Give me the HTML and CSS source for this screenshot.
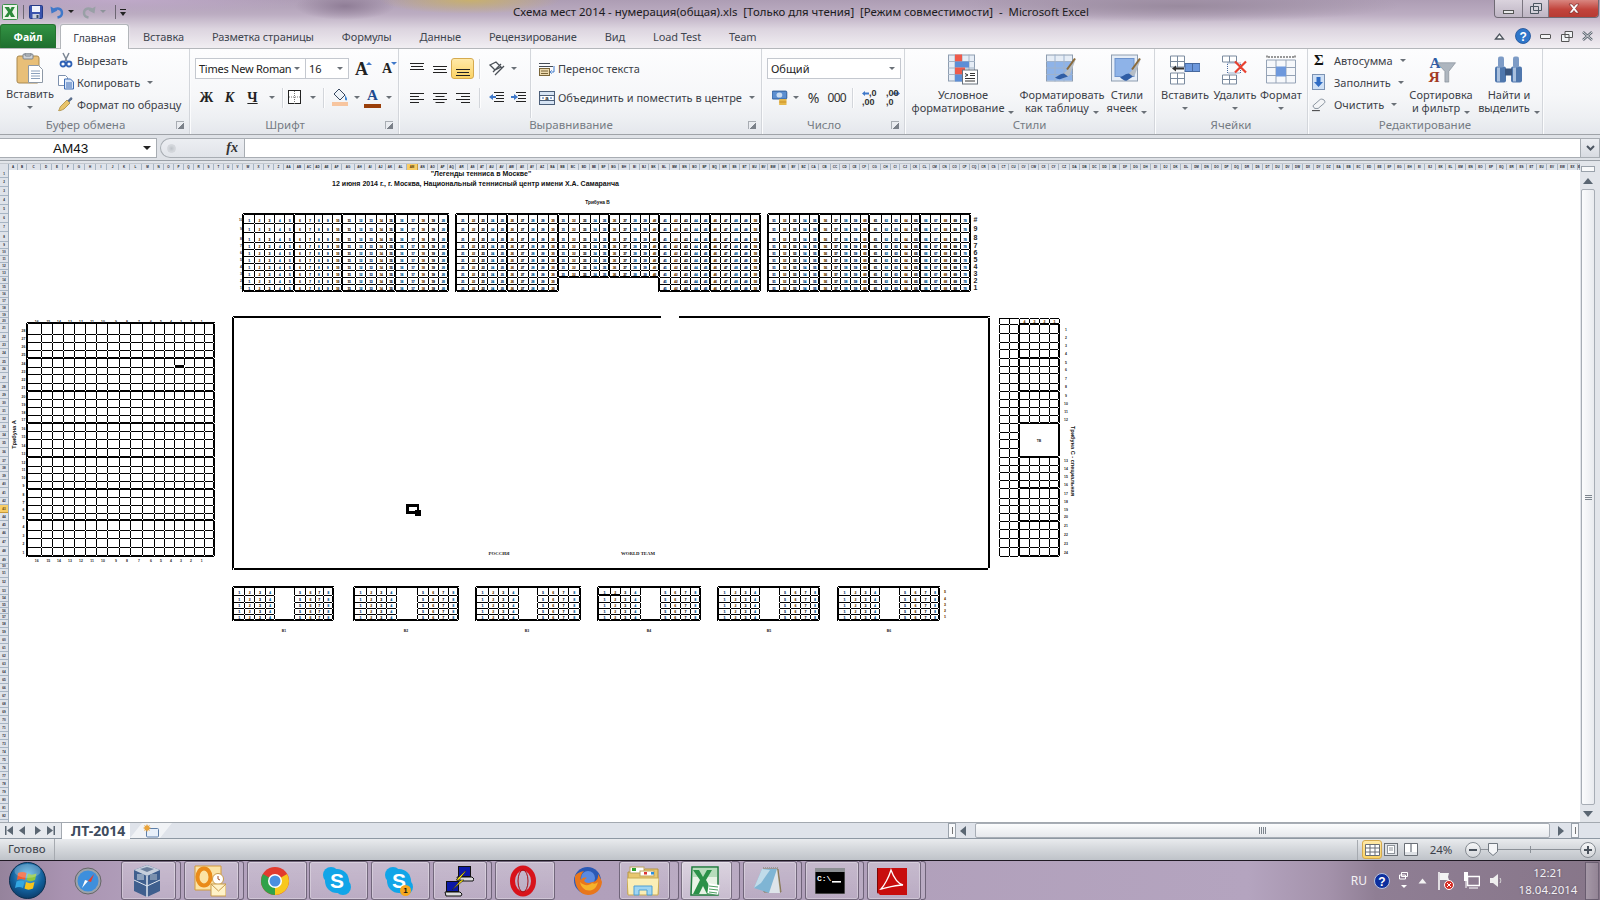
FILE: index.html
```html
<!DOCTYPE html>
<html lang="ru">
<head>
<meta charset="utf-8">
<title>Схема мест 2014 - Microsoft Excel</title>
<link rel="stylesheet" href="styles.css">
</head>
<body>
<div class="window">

<header class="top">
  <div class="titlebar">
    <div class="qat">
      <svg class="q-app" width="16" height="16" viewBox="0 0 16 16"><rect x=".5" y=".5" width="15" height="15" rx="1" fill="#eef6ec" stroke="#3c8f4b"/><path d="M2.5 3H7l1.2 2.6L9.6 3h3.2L10 8l3 5H9l-1.3-2.8L6.2 13H2.5l3.600-5z" fill="#2d8a3c"/></svg>
      <i class="q-sep"></i>
      <svg class="q-save" width="14" height="14" viewBox="0 0 14 14"><rect x=".5" y=".5" width="13" height="13" rx="1" fill="#3953ad" stroke="#243a86"/><rect x="3" y="1" width="8" height="6" fill="#eef2fb"/><rect x="3.500" y="9" width="7" height="4.500" fill="#c8cfdf"/><rect x="7.500" y="10" width="2" height="3" fill="#39485f"/></svg>
      <svg class="q-undo" width="14" height="14" viewBox="0 0 14 14"><path d="M3 5.500c4-3.500 9-2 9 2.500 0 2.500-2 4-4.500 4.500" fill="none" stroke="#3f78c9" stroke-width="2.400"/><path d="M.5 1.500l1 7 6-3z" fill="#3f78c9"/></svg>
      <i class="caret dark"></i>
      <svg class="q-redo" width="14" height="14" viewBox="0 0 14 14"><path d="M11 5.500C7 2 2 3.500 2 8c0 2.500 2 4 4.500 4.500" fill="none" stroke="#99a0a6" stroke-width="2.400"/><path d="M13.500 1.500l-1 7-6-3z" fill="#99a0a6"/></svg>
      <i class="caret grey"></i>
      <i class="q-sep wide"></i>
      <svg class="q-cust" width="8" height="10" viewBox="0 0 8 10"><path d="M1 2h6v1H1zM1 5h6L4 9z" fill="#222"/></svg>
    </div>
    <div class="doc-title">Схема мест 2014 - нумерация(общая).xls&nbsp; [Только для чтения]&nbsp; [Режим совместимости]&nbsp; -&nbsp; Microsoft Excel</div>
    <div class="winbtns">
      <div class="wb wb-min"><i></i></div>
      <div class="wb wb-max"><svg width="12" height="11" viewBox="0 0 12 11"><path d="M3.500.5h8v7h-8zM.5 3.500h8v7h-8z" fill="#dfe3e8" fill-opacity=".5" stroke="#4b5560"/></svg></div>
      <div class="wb wb-close"><svg width="14" height="11" viewBox="0 0 14 11"><path d="M2 1h3l2 2.500L9 1h3L8.500 5.500 12 10H9L7 7.500 5 10H2l3.500-4.500z" fill="#fff" stroke="#6b1d1d" stroke-width=".6"/></svg></div>
    </div>
  </div>
  <nav class="tabs">
    <div class="tab-file">Файл</div>
    <div class="tab active">Главная</div>
    <div class="tab">Вставка</div>
    <div class="tab">Разметка страницы</div>
    <div class="tab">Формулы</div>
    <div class="tab">Данные</div>
    <div class="tab">Рецензирование</div>
    <div class="tab">Вид</div>
    <div class="tab">Load Test</div>
    <div class="tab">Team</div>
    <div class="tab-tools">
      <svg width="11" height="8" viewBox="0 0 11 8"><path d="M1.500 7L5.500 2l4 5z" fill="#fff" stroke="#4d555e" stroke-width="1.300"/></svg>
      <svg class="help" width="16" height="16" viewBox="0 0 16 16"><circle cx="8" cy="8" r="7.500" fill="#2f76c9" stroke="#1d4f95" stroke-width=".8"/><text x="8" y="12.500" class="help-q">?</text></svg>
      <i class="mini-min"></i>
      <svg width="12" height="11" viewBox="0 0 12 11"><path d="M4 .5h7.500v6H4zM.5 3.500h7.500v7H.5z" fill="#f1f3f5" stroke="#555"/></svg>
      <svg width="11" height="10" viewBox="0 0 11 10"><path d="M1 1l9 8M10 1L1 9" stroke="#5c6570" stroke-width="2.400"/><path d="M1 1l9 8M10 1L1 9" stroke="#f5f6f7" stroke-width=".8"/></svg>
    </div>
  </nav>
</header>

<div class="ribbon">

  <section class="group g-clip">
    <div class="body">
      <div class="big w-paste">
        <svg width="28" height="31" viewBox="0 0 28 31"><rect x="1" y="3" width="22" height="27" rx="2" fill="#e8bf78" stroke="#a8884f"/><rect x="7" y="1" width="10" height="5" rx="1" fill="#cfd3d8" stroke="#7d848c"/><rect x="9" y="0" width="6" height="3" rx="1" fill="none" stroke="#7d848c"/><path d="M12.500 12.500h10l4 4v13h-14z" fill="#fff" stroke="#8e99a6"/><path d="M15 18h9M15 20.500h9M15 23h9M15 25.500h9" stroke="#8ba0bb"/></svg>
        <span class="lbl">Вставить</span>
        <i class="caret"></i>
      </div>
      <div class="stack s-clip">
        <div class="item"><svg width="16" height="16" viewBox="0 0 16 16"><path d="M5 1l4 8M11 1L7 9" stroke="#7b8694" stroke-width="1.500"/><circle cx="5" cy="12" r="2.500" fill="none" stroke="#2f61b5" stroke-width="1.800"/><circle cx="11" cy="12" r="2.500" fill="none" stroke="#2f61b5" stroke-width="1.800"/></svg><span>Вырезать</span></div>
        <div class="item"><svg width="16" height="16" viewBox="0 0 16 16"><path d="M.5 1.500h7l2 2v8h-9z" fill="#fff" stroke="#7d90ad"/><path d="M6.500 5h6l3 3v7h-9z" fill="#d9e6f8" stroke="#3f6db3"/><path d="M8 9h6M8 11h6M8 13h6" stroke="#3f6db3"/></svg><span>Копировать</span><i class="caret after"></i></div>
        <div class="item"><svg width="16" height="16" viewBox="0 0 16 16"><path d="M9 4l3 3-6 6c-2 1-4 2-5.500 1.500C2 13 1.500 11 3 10z" fill="#e9c46a" stroke="#a98a3e" stroke-width=".8"/><path d="M9.500 4.500l3-3c1-.8 2.500.6 1.700 1.700l-3 3z" fill="#5b6f8d"/></svg><span>Формат по образцу</span></div>
      </div>
    </div>
    <div class="glabel"><span>Буфер обмена</span><i class="launcher"></i></div>
  </section>

  <section class="group g-font">
    <div class="body col">
      <div class="row r1">
        <div class="combo c-font"><span>Times New Roman</span><i class="caret"></i></div>
        <div class="combo c-size"><span>16</span><i class="caret"></i></div>
        <div class="fontsz grow">A<i class="up"></i></div>
        <div class="fontsz shrink">A<i class="down"></i></div>
      </div>
      <div class="row r2">
        <div class="fb f-b">Ж</div>
        <div class="fb f-i">К</div>
        <div class="fb f-u">Ч</div>
        <i class="caret cc"></i>
        <i class="vsep"></i>
        <svg width="17" height="15" viewBox="0 0 17 15"><rect x=".5" y=".5" width="12" height="13" fill="#fff" stroke="#222"/><path d="M6.500 1v13M1 7h12" stroke="#777" stroke-dasharray="1 1"/></svg>
        <i class="caret cc"></i>
        <i class="vsep"></i>
        <svg class="m-fill" width="17" height="19" viewBox="0 0 17 19"><path d="M7 1l6 6-5 5-6-6z" fill="#eef3f8" stroke="#37475f"/><path d="M13 7c1 2 2.500 3 2 5-1 1-2 0-2-1z" fill="#3f86d2"/><rect y="14" width="16" height="4" fill="#f7c59f"/></svg>
        <i class="caret cc"></i>
        <div class="fcolor">A<i></i></div>
        <i class="caret cc"></i>
      </div>
    </div>
    <div class="glabel"><span>Шрифт</span><i class="launcher"></i></div>
  </section>

  <section class="group g-align">
    <div class="body">
      <div class="col a-left">
        <div class="row r1">
          <div class="ab"><svg width="14" height="14" viewBox="0 0 14 14"><path d="M0 1.500h14M1 4.500h12M0 7.500h14" stroke="#222"/></svg></div>
          <div class="ab"><svg width="14" height="14" viewBox="0 0 14 14"><path d="M0 4.500h14M1 7.500h12M0 10.500h14" stroke="#222"/></svg></div>
          <div class="ab on"><svg width="14" height="14" viewBox="0 0 14 14"><path d="M0 7.500h14M1 10.500h12M0 13.500h14" stroke="#222"/></svg></div>
          <i class="vsep"></i>
          <svg class="orient" width="17" height="15" viewBox="0 0 17 15"><path d="M1 4l6-3 5 5-6 3zM4 11l8-8M6 14l9-9" fill="none" stroke="#4a4f56" stroke-width="1.300"/></svg>
          <i class="caret cc"></i>
        </div>
        <div class="row r2">
          <div class="ab"><svg width="14" height="12" viewBox="0 0 14 12"><path d="M0 1.500h14M0 4.500h9M0 7.500h14M0 10.500h9" stroke="#222"/></svg></div>
          <div class="ab"><svg width="14" height="12" viewBox="0 0 14 12"><path d="M0 1.500h14M2.500 4.500h9M0 7.500h14M2.500 10.500h9" stroke="#222"/></svg></div>
          <div class="ab"><svg width="14" height="12" viewBox="0 0 14 12"><path d="M0 1.500h14M5 4.500h9M0 7.500h14M5 10.500h9" stroke="#222"/></svg></div>
          <i class="vsep"></i>
          <svg class="ind" width="15" height="14" viewBox="0 0 15 14"><path d="M5 1.500h10M7 4.500h8M7 7.500h8M5 10.500h10" stroke="#222"/><path d="M0 6l4-3v2h3v2H4v2z" fill="#3f78c9"/></svg>
          <svg class="ind i2" width="15" height="14" viewBox="0 0 15 14"><path d="M5 1.500h10M7 4.500h8M7 7.500h8M5 10.500h10" stroke="#222"/><path d="M7 6L3 3v2H0v2h3v2z" fill="#3f78c9"/></svg>
        </div>
      </div>
      <div class="col a-right">
        <div class="row r1 item">
          <svg width="16" height="14" viewBox="0 0 16 14"><path d="M0 1.500h11M0 4.500h14" stroke="#454b55"/><rect x=".5" y="6.500" width="10" height="7" fill="#ecd9ae" stroke="#7a6538"/><path d="M2 9h7M2 11.500h7" stroke="#7a6538"/><path d="M15 4v6h-2M13 8.500L11 10l2 1.500" fill="none" stroke="#3f78c9"/></svg>
          <span>Перенос текста</span>
        </div>
        <div class="row r2 item">
          <svg width="16" height="14" viewBox="0 0 16 14"><rect x=".5" y=".5" width="15" height="13" fill="#d7e4f4" stroke="#4c5f79"/><path d="M1 4.500h14M1 9.500h14" stroke="#4c5f79"/><rect x="2" y="5" width="12" height="4" fill="#fff"/><path d="M3 7h2M11 7h2" stroke="#2b5faa"/><text x="8" y="9" class="mini-a">a</text></svg>
          <span>Объединить и поместить в центре</span><i class="caret after"></i>
        </div>
      </div>
    </div>
    <div class="glabel"><span>Выравнивание</span><i class="launcher"></i></div>
  </section>

  <section class="group g-num">
    <div class="body col">
      <div class="row r1"><div class="combo c-num"><span>Общий</span><i class="caret"></i></div></div>
      <div class="row r2">
        <svg class="money" width="16" height="16" viewBox="0 0 16 16"><rect y="1" width="15" height="8" rx="1" fill="#5c8fd0" stroke="#2f5d98"/><ellipse cx="7.500" cy="5" rx="3" ry="2.600" fill="#c9dcf2"/><rect x="7" y="9" width="8" height="2" rx="1" fill="#e5b84c"/><rect x="7" y="11" width="8" height="2" rx="1" fill="#d8a336"/><rect x="7" y="13" width="8" height="2" rx="1" fill="#e5b84c"/></svg>
        <i class="caret cc"></i>
        <div class="pct">%</div>
        <div class="thou">000</div>
        <i class="vsep"></i>
        <div class="dec"><svg width="7" height="7" viewBox="0 0 7 7"><path d="M0 3.500L3 1v1.500h4v2H3V6z" fill="#3f78c9"/></svg><span>,0</span><span class="l2">,00</span></div>
        <div class="dec dec2"><svg width="7" height="7" class="d2" viewBox="0 0 7 7"><path d="M7 3.500L4 1v1.500H0v2h4V6z" fill="#3f78c9"/></svg><span>,00</span><span class="l2">,0</span></div>
      </div>
    </div>
    <div class="glabel"><span>Число</span><i class="launcher"></i></div>
  </section>

  <section class="group g-styles">
    <div class="body">
      <div class="big w-cond">
        <svg width="30" height="30" viewBox="0 0 30 30"><rect x=".5" y=".5" width="26" height="26" fill="#e6edf6" stroke="#8e9db0"/><path d="M7 0v27M14 0v27M21 0v27M0 7h27M0 13.500h27M0 20h27" stroke="#a5b4c6"/><rect x="7" y="0" width="7" height="7" fill="#ef5a4a"/><rect x="7" y="7" width="14" height="6" fill="#5d8ed6"/><rect x="7" y="13" width="10" height="7" fill="#ef5a4a"/><rect x="7" y="20" width="7" height="7" fill="#5d8ed6"/><rect x="14.500" y="15.500" width="15" height="14" fill="#fff" stroke="#69727d"/><path d="M17 19l3 1.500-3 1.500M22 19h5M22 21h5M17 24h10M17 26.500h10" stroke="#333" fill="none"/></svg>
        <span class="lbl">Условное<br>форматирование<i class="caret after2"></i></span>
      </div>
      <div class="big w-table">
        <svg width="32" height="30" viewBox="0 0 32 30"><rect x=".5" y=".5" width="26" height="26" fill="#e6edf6" stroke="#8e9db0"/><rect x="1" y="7" width="25" height="19" fill="#8eb3e8"/><path d="M9 0v27M18 0v27M0 7h27M0 13.500h27M0 20h27" stroke="#9eb2cc"/><path d="M30 4L20 17l-2 2-2 5 6-2 2-2z" fill="#b5bdc6"/><path d="M16 24l6-2-4-3c-4 0-6 3-9 4 3 2 5 2 7 1z" fill="#2f5da5"/><path d="M21 15l8-11" stroke="#8a6a3a" stroke-width="2"/></svg>
        <span class="lbl">Форматировать<br>как таблицу<i class="caret after2"></i></span>
      </div>
      <div class="big w-cstyle">
        <svg width="32" height="30" viewBox="0 0 32 30"><rect x=".5" y=".5" width="26" height="26" fill="#e6edf6" stroke="#8e9db0"/><rect x="4" y="4" width="19" height="18" fill="#8eb3e8" stroke="#6d93cc"/><path d="M30 4L20 17l-2 2-2 5 6-2 2-2z" fill="#b5bdc6"/><path d="M16 26l6-4-4-3c-4 0-6 3-9 4 3 2 5 4 7 3z" fill="#2f5da5"/><path d="M21 15l8-11" stroke="#8a6a3a" stroke-width="2"/></svg>
        <span class="lbl">Стили<br>ячеек<i class="caret after2"></i></span>
      </div>
    </div>
    <div class="glabel center"><span>Стили</span></div>
  </section>

  <section class="group g-cells">
    <div class="body">
      <div class="big w-50">
        <svg width="30" height="30" viewBox="0 0 30 30"><path d="M.5 1.500h14v11H.5zM.5 7h14M7.500 1.500v11M.5 18.500h14v11H.5zM.5 24h14M7.500 18.500v11" fill="#fff" stroke="#7a8a9e"/><rect x="15" y="9" width="15" height="8" fill="#6d98dc" stroke="#47699f"/><path d="M22.500 9v8" stroke="#47699f"/><path d="M6 13h8v2H6v2l-4-3 4-3z" fill="#333"/></svg>
        <span class="lbl">Вставить</span><i class="caret"></i>
      </div>
      <div class="big w-50">
        <svg width="26" height="30" viewBox="0 0 26 30"><path d="M.5 1.500h14v6H.5zM7.500 1.500v6M.5 20.500h14v9H.5zM.5 25h14M7.500 20.500v9" fill="#fff" stroke="#7a8a9e"/><rect x="5.500" y="8.500" width="13" height="10" fill="none" stroke="#46689e" stroke-dasharray="1 1"/><path d="M13 7l11 11M24 7L13 18" stroke="#e8402f" stroke-width="2.200"/></svg>
        <span class="lbl">Удалить</span><i class="caret"></i>
      </div>
      <div class="big w-42">
        <svg width="30" height="30" viewBox="0 0 30 30"><path d="M1 1v3M29 1v3M2 2.500h26" stroke="#333" stroke-dasharray="2 1" fill="none"/><path d="M.5 5.500h29v23h-29zM10 5.500v23M20 5.500v23M.5 13h29M.5 21h29" fill="#f6f8fb" stroke="#95a3b6"/><rect x="10" y="12" width="10" height="10" fill="#6d98dc"/></svg>
        <span class="lbl">Формат</span><i class="caret"></i>
      </div>
    </div>
    <div class="glabel center"><span>Ячейки</span></div>
  </section>

  <section class="group g-edit">
    <div class="body">
      <div class="stack s-edit">
        <div class="item"><b class="sigma">Σ</b><span>Автосумма</span><i class="caret after"></i></div>
        <div class="item"><svg width="14" height="16" viewBox="0 0 14 16"><rect x=".5" y=".5" width="12" height="15" fill="#cfe0f5" stroke="#7c93b3"/><path d="M4.500 3h4v5H11l-4.500 5L2 8h2.500z" fill="#2f6cc4"/></svg><span>Заполнить</span><i class="caret after"></i></div>
        <div class="item"><svg width="16" height="15" viewBox="0 0 16 15"><path d="M1 9l8-7c1-1 3-1 5 .6 1 1.500 1 2.400 0 3.400l-7 6H3z" fill="#f4f5f7" stroke="#7c8794"/><path d="M0 14.500h9" stroke="#222"/></svg><span>Очистить</span><i class="caret after"></i></div>
      </div>
      <div class="big w-sort">
        <svg width="32" height="32" viewBox="0 0 32 32"><text x="4" y="14" class="az a">А</text><text x="3" y="29" class="az y">Я</text><path d="M12 9h19l-7 9v11h-4V18z" fill="#aeb6bf" stroke="#7b848e" stroke-width=".6"/></svg>
        <span class="lbl">Сортировка<br>и фильтр<i class="caret after2"></i></span>
      </div>
      <div class="big w-find">
        <svg width="30" height="30" viewBox="0 0 30 30"><rect x="1" y="12" width="11" height="16" rx="2" fill="#4f77ad"/><rect x="17" y="12" width="11" height="16" rx="2" fill="#4f77ad"/><rect x="4" y="2" width="6" height="11" rx="2" fill="#7d9bc6"/><rect x="19" y="2" width="6" height="11" rx="2" fill="#7d9bc6"/><rect x="11" y="14" width="7" height="7" fill="#39557e"/><rect x="3" y="13" width="3" height="14" fill="#a9c0de"/><rect x="19" y="13" width="3" height="14" fill="#a9c0de"/></svg>
        <span class="lbl">Найти и<br>выделить<i class="caret after2"></i></span>
      </div>
    </div>
    <div class="glabel center"><span>Редактирование</span></div>
  </section>
</div>

<div class="fbar">
  <div class="namebox"><span>AM43</span><i class="caret black"></i></div>
  <div class="fx"><i class="fx-dot"></i><em>fx</em></div>
  <div class="finput"></div>
  <div class="fexp"><svg width="9" height="7" viewBox="0 0 9 7"><path d="M1 1l3.500 3.500L8 1" fill="none" stroke="#4d5662" stroke-width="2"/></svg></div>
</div>

<main class="sheet">
  <div class="grid-side">
    <div class="colhead" id="colhead"><div class="corner"></div></div>
    <div class="sheet-body">
      <div class="rowhead" id="rowhead"></div>
      <div class="canvas" id="canvas"></div>
    </div>
  </div>
  <aside class="vscroll">
    <div class="vsplit"></div>
    <div class="varrow"><i class="tri-up"></i></div>
    <div class="vthumb"><i></i></div>
    <div class="varrow"><i class="tri-down"></i></div>
  </aside>
</main>

<div class="tabbar">
  <div class="navs">
    <svg width="8" height="9" viewBox="0 0 8 9"><path d="M0 0h1.500v9H0zM8 0v9L2 4.500z" fill="#5a6672"/></svg>
    <svg width="8" height="9" viewBox="0 0 8 9"><path d="M6 0v9L0 4.500z" fill="#5a6672"/></svg>
    <svg width="8" height="9" viewBox="0 0 8 9"><path d="M2 0v9l6-4.500z" fill="#5a6672"/></svg>
    <svg width="8" height="9" viewBox="0 0 8 9"><path d="M8 0H6.500v9H8zM0 0v9l6-4.500z" fill="#5a6672"/></svg>
  </div>
  <div class="sheet-tab">ЛТ-2014</div>
  <div class="new-tab"><svg width="16" height="14" viewBox="0 0 16 14"><rect x="3.500" y="4.500" width="12" height="8.500" rx="1" fill="#e8f0fa" stroke="#5e7fa8"/><path d="M4 0l1 2 2-1-1 2 2 1-2 1 1 2-2-1-1 2-1-2-2 1 1-2-2-1 2-1-1-2 2 1z" fill="#e9a33b"/></svg></div>
  <div class="hscroll">
    <div class="hsplit"><i></i></div>
    <i class="tri-left"></i>
    <div class="hthumb"><i></i></div>
    <i class="tri-right"></i>
    <div class="hsplit s2"><i></i></div>
  </div>
</div>

<div class="status">
  <div class="st-ready">Готово</div>
  <div class="st-right">
    <i class="st-sep"></i>
    <div class="vb on"><svg width="15" height="12" viewBox="0 0 15 12"><path d="M.5.5h14v11H.5zM5 .5v11M10 .5v11M.5 4h14M.5 8h14" fill="#fff" stroke="#6a6f76"/></svg></div>
    <div class="vb"><svg width="14" height="13" viewBox="0 0 14 13"><rect x=".5" y=".5" width="13" height="12" fill="#dfe2e6" stroke="#6a6f76"/><rect x="3.500" y="2.500" width="7" height="8" fill="#fff" stroke="#8e949b"/><path d="M5 5h4M5 7h4" stroke="#8e949b"/></svg></div>
    <div class="vb"><svg width="14" height="13" viewBox="0 0 14 13"><path d="M.5.5h13v12H.5z" fill="#dfe2e6" stroke="#6a6f76"/><path d="M1 1h5v8H1zM8 1h5v8H8z" fill="#fff"/><path d="M7 1v8" stroke="#6a6f76"/></svg></div>
    <div class="zoomval">24%</div>
    <div class="zbtn"><i></i></div>
    <div class="zline"><svg class="zthumb" width="10" height="13" viewBox="0 0 10 13"><path d="M.5.5h9v8L5 12.500.5 8.500z" fill="#f4f5f7" stroke="#717880"/></svg><i class="ztick"></i></div>
    <div class="zbtn plus"><i></i></div>
  </div>
</div>

<footer class="taskbar">
  <div class="orb"><svg width="37" height="37" viewBox="0 0 37 37"><defs><radialGradient id="og" cx=".5" cy=".35" r=".7"><stop offset="0" stop-color="#5bb8e6"/><stop offset=".6" stop-color="#12609c"/><stop offset="1" stop-color="#0a3560"/></radialGradient></defs><circle cx="18.500" cy="18.500" r="18" fill="url(#og)" stroke="#0b2f50"/><path d="M9 11c3-1.500 6-1.500 8.500 0l-1.500 7c-2.500-1.500-5-1.500-8 0z" fill="#ef5c30"/><path d="M19 11.500c2.500 1.500 5 1.500 8.500 0L26 18c-3 1.500-6 1.500-8.500 0z" fill="#8dc63f"/><path d="M7.500 19.500c3-1.500 5.500-1.500 8 0L14 26c-2.500-1.500-5-1.500-8 0z" fill="#33a7e2"/><path d="M17 20c2.500 1.500 5.500 1.500 8.500 0L24 26.500c-3 1.500-6 1.500-8.500 0z" fill="#f8c41c"/><ellipse cx="18.500" cy="9" rx="13" ry="7" fill="#fff" fill-opacity=".22"/></svg></div>
  <div class="plain p-safari"><svg width="28" height="28" viewBox="0 0 28 28"><circle cx="14" cy="14" r="13" fill="#9ca3ab" stroke="#666"/><circle cx="14" cy="14" r="10.500" fill="#3e8fdc"/><path d="M14 14l6-7-3 8z" fill="#e53d2e"/><path d="M14 14l-6 7 3-8z" fill="#fff"/></svg></div>
  <div class="tb w55"><svg width="28" height="34" viewBox="0 0 28 34"><path d="M14 1l13 5v21l-13 6L1 27V6z" fill="#3f5f8e"/><path d="M14 1l13 5-13 6L1 6z" fill="#c6cfdc"/><path d="M14 12v21" stroke="#dfe5ee" stroke-width="1.500"/><path d="M1 16l13 6 13-6" stroke="#dfe5ee" fill="none"/><path d="M7 5l7-2 7 2-7 3z" fill="#6a7f9c"/><rect x="4" y="10" width="7" height="6" fill="#8ea2bd"/><rect x="17" y="10" width="7" height="6" fill="#7a90ad"/></svg></div>
  <i class="tail"></i>
  <div class="tb w55 m3"><svg width="32" height="32" viewBox="0 0 32 32"><path d="M1 1h26v24H1z" fill="#fbe3a6" stroke="#d39a3b"/><ellipse cx="10" cy="12" rx="6.500" ry="8.500" fill="none" stroke="#ea8b1a" stroke-width="4"/><circle cx="24" cy="14" r="5.500" fill="#fff" stroke="#c89a4a"/><path d="M24 11v3l2 1" fill="none" stroke="#a0522d"/><path d="M17 19h15v12H17z" fill="#fff2c8" stroke="#c89a4a"/><path d="M17 19l7.500 7 7.500-7" fill="none" stroke="#c89a4a"/></svg></div>
  <i class="tail"></i>
  <div class="tb w60 m3"><svg width="28" height="28" viewBox="0 0 28 28"><circle cx="14" cy="14" r="14" fill="#e23b2e"/><path d="M14 14L26.100 7A14 14 0 0 1 14 28z" fill="#f7c81e"/><path d="M14 14v14A14 14 0 0 1 1.900 7z" fill="#30a24a"/><circle cx="14" cy="14" r="7" fill="#fff"/><circle cx="14" cy="14" r="5.500" fill="#4a8fdf"/></svg></div>
  <div class="tb w59 m2"><svg width="30" height="30" viewBox="0 0 30 30"><circle cx="9" cy="9" r="8" fill="#11a5e8"/><circle cx="21" cy="21" r="8" fill="#11a5e8"/><circle cx="15" cy="15" r="12" fill="#11a5e8"/><text x="15" y="22" class="sky">S</text></svg></div>
  <div class="tb w59 m3 badge-wrap"><svg width="30" height="30" viewBox="0 0 30 30"><circle cx="9" cy="9" r="8" fill="#11a5e8"/><circle cx="21" cy="21" r="8" fill="#11a5e8"/><circle cx="15" cy="15" r="12" fill="#11a5e8"/><text x="15" y="22" class="sky">S</text></svg><b class="badge">1</b></div>
  <div class="tb w54 m3"><svg width="31" height="32" viewBox="0 0 31 32"><rect x="15.500" y="1.500" width="12" height="10" fill="#0b18a8" stroke="#111"/><path d="M14 12h15l2 2-1 2H15z" fill="#ddd" stroke="#111"/><rect x="3.500" y="16.500" width="12" height="10" fill="#0b18a8" stroke="#111"/><path d="M2 27h15l2 2-1 2H3z" fill="#ddd" stroke="#111"/><path d="M22 6l-9 9h5L9 25l12-10h-5l7-9z" fill="#ffe70a" stroke="#222" stroke-width=".6"/></svg></div>
  <i class="tail"></i>
  <div class="tb w60 m3"><svg width="26" height="32" viewBox="0 0 26 32"><ellipse cx="13" cy="16" rx="10.500" ry="13" fill="none" stroke="#d8131b" stroke-width="5"/><ellipse cx="13" cy="16" rx="5" ry="11" fill="none" stroke="#a50c12" stroke-width="1"/></svg></div>
  <div class="plain p-fox"><svg width="31" height="31" viewBox="0 0 31 31"><circle cx="15.500" cy="15.500" r="13.500" fill="#2b59b5"/><circle cx="16" cy="13" r="7" fill="#5b8ae0"/><path d="M3 11C2 21 8 30 16 30c8 0 13.500-6 14-13-1-3-2.500-6-4-8 .5 4-1 7-5 8-3 .5-5 2-8 0-1-1-1-3 2-4-3-1-5 0-6 2-1-2 0-6 3-9C8 7 5 8 3 11z" fill="#e8761c"/><path d="M20 18c-3 3-8 3-12-1 1 6 6 10 12 8 3-1 5-4 6-8-2 2-4 2-6 1z" fill="#f6b22a"/></svg></div>
  <div class="tb w51"><svg width="32" height="30" viewBox="0 0 32 30"><path d="M1 6h14l3-3h13v25H1z" fill="#e8c76f" stroke="#b59442"/><rect x="3" y="1" width="14" height="6" fill="#fff" stroke="#bda35f"/><rect x="5" y="2" width="4" height="3" fill="#2da02d"/><rect x="13" y="5" width="14" height="5" fill="#fff" stroke="#bda35f"/><rect x="17" y="6" width="3" height="2.500" fill="#d33"/><rect x="24" y="6" width="3" height="2.500" fill="#2a8fe0"/><path d="M0 12h32l-1 17H1z" fill="#fbeeb6" stroke="#c8a955"/><path d="M7 29v-9h18v9h-5v-5h-8v5z" fill="#9fd5f2" stroke="#4f9fd4"/></svg></div>
  <i class="tail t2"></i>
  <div class="tb w51 m2 act"><svg width="30" height="30" viewBox="0 0 30 30"><path d="M2 1h26v28H1z" fill="#e8f3e6" stroke="#1d7a3b" stroke-width="1.500"/><path d="M3 2h24v9H3z" fill="#b7dcbc"/><path d="M3 4h6l4 7 4-7h5l-6 10 8 14h-7l-4-8-4 8H3l7-14z" fill="#2b9148"/><path d="M18 18h11v10H18z" fill="#fff" transform="rotate(8 23 23)"/><path d="M19 20l9 1M19 23l9 1M19 26l8 1" stroke="#4e9e62"/></svg></div>
  <i class="tail t1"></i>
  <div class="tb w54 m3"><svg width="30" height="30" viewBox="0 0 30 30"><path d="M10 3h15l3 23H11z" fill="#a89877" stroke="#857755"/><path d="M9 3h15L27 27H16z" fill="#dde4ea"/><path d="M9 3L1 22l15 5 8-24z" fill="#7fb5d4"/><path d="M9 3L1 22l7-5 9-13z" fill="#c0dbe9" /><path d="M10 2h15" stroke="#999" stroke-width="2" stroke-dasharray="1 1"/></svg></div>
  <i class="tail"></i>
  <div class="tb w54 m3"><svg width="30" height="26" viewBox="0 0 30 26"><rect width="30" height="26" fill="#000" stroke="#888"/><rect width="30" height="4" fill="#8c8f93"/><text x="2" y="13" class="cmd">C:\</text><rect x="17" y="13" width="9" height="1.600" fill="#fff"/></svg></div>
  <i class="tail"></i>
  <div class="tb w54 m3"><svg width="30" height="28" viewBox="0 0 30 28"><path d="M0 1h30v27H3l-3-3z" fill="#c80d0d"/><path d="M0 25V1h1v26z" fill="#7a0606"/><path d="M14 3c-2 7-7 16-10 19 5-1 14-4 22-4-4-1-8-4-12-15z" fill="none" stroke="#fff" stroke-width="1.300"/></svg></div>
  <i class="tail"></i>
  <div class="tray">
    <span class="ru">RU</span>
    <svg width="16" height="16" viewBox="0 0 16 16"><circle cx="8" cy="8" r="7.500" fill="#0c2f9e" stroke="#b8c4e0"/><text x="8" y="12.500" class="help-q">?</text></svg>
    <svg class="act-ic" width="10" height="18" viewBox="0 0 10 18"><path d="M2.500.5h6v4h-6zM.5 3h6v4h-6z" fill="none" stroke="#fff"/><path d="M2 13h6l-3 3z" fill="#fff"/></svg>
    <svg width="9" height="6" viewBox="0 0 9 6"><path d="M.5 5.500l4-5 4 5z" fill="#f3f3f3"/></svg>
    <svg width="17" height="18" viewBox="0 0 17 18"><path d="M2 0v18" stroke="#fff" stroke-width="1.500"/><path d="M3 1h9l-1 4 1 3H3z" fill="#f3f3f3"/><circle cx="12" cy="13" r="4.500" fill="#d42b22" stroke="#fff"/><path d="M10 11l4 4M14 11l-4 4" stroke="#fff"/></svg>
    <svg width="17" height="17" viewBox="0 0 17 17"><rect x="4.500" y="4.500" width="12" height="9" fill="none" stroke="#fff" stroke-width="1.500"/><path d="M6 16h9" stroke="#fff"/><rect x="1" y="0" width="4" height="9" fill="#fff"/><path d="M3 9v7" stroke="#fff"/></svg>
    <svg width="13" height="15" viewBox="0 0 13 15"><path d="M0 5h3l5-4v13l-5-4H0z" fill="#eee"/><path d="M10 5c1 1.500 1 3.500 0 5" stroke="#ddd" fill="none"/></svg>
    <div class="clock"><div>12:21</div><div>18.04.2014</div></div>
    <div class="showdesk"></div>
  </div>
</footer>
</div>
<script src="script.js"></script>
</body>
</html>
```
FILE: styles.css
```css
*{box-sizing:border-box}
html,body{margin:0;padding:0;height:100%}
body{width:1600px;height:900px;overflow:hidden;background:#fff;font-family:"Noto Sans","Open Sans",sans-serif;font-size:11px;color:#3c4148}
i{display:block;font-style:normal}
.window{display:flex;flex-direction:column;width:1600px;height:900px}

.top{height:48px;flex:none;background:
 radial-gradient(90px 14px at 470px 0,#c8b06e 0,rgba(200,176,110,0) 100%),
 radial-gradient(50px 14px at 345px 6px,#8f7d96 0,rgba(143,125,150,0) 100%),
 radial-gradient(220px 16px at 1180px 6px,#998a9e 0,rgba(153,138,158,0) 100%),
 radial-gradient(200px 14px at 120px 0,#bfa9c9 0,rgba(191,169,201,0) 100%),
 linear-gradient(#ad9db4 0,#bcadc2 30%,#dcd4df 60%,#f1eef2 100%);
}
.titlebar{height:24px;display:flex;align-items:flex-start}
.qat{display:flex;align-items:center;width:513px;padding:3px 0 0 2px;height:20px}
.q-sep{width:1px;height:14px;background:#6c6672;margin:0 5px 0 5px}
.q-sep.wide{margin:0 3px 0 9px}
.q-undo{margin-left:7px}
.q-redo{margin-left:8px}
.caret{width:0;height:0;border-left:3px solid transparent;border-right:3px solid transparent;border-top:3px solid #6a7077;flex:none}
.caret.dark{border-top-color:#222;margin-left:4px}
.caret.grey{border-top-color:#8d939a;margin-left:4px}
.caret.black{border-top-color:#222;border-left-width:4px;border-right-width:4px;border-top-width:4px}
.doc-title{font-size:11.400px;color:#1b1b20;line-height:23px;white-space:nowrap}
.winbtns{margin-left:auto;display:flex;height:18px;margin-right:1px;border:1px solid #6f6a74;border-top:0;border-radius:0 0 4px 4px;overflow:hidden}
.wb{display:flex;align-items:center;justify-content:center;height:17px}
.wb-min{width:28px;background:linear-gradient(rgba(255,255,255,.55),rgba(190,185,195,.55));border-right:1px solid #7b7580}
.wb-min i{width:11px;height:4px;border:1px solid #555;background:#e8e8ea;margin-top:6px}
.wb-max{width:26px;background:linear-gradient(rgba(255,255,255,.55),rgba(190,185,195,.55));border-right:1px solid #7b7580}
.wb-close{width:49px;background:linear-gradient(#d98680,#c2443c 55%,#b73b33)}

.tabs{display:flex;height:24px;align-items:stretch;font-size:11px;letter-spacing:-.12px}
.tab-file{width:56px;background:linear-gradient(#329343,#1e6e2f);color:#fff;font-weight:700;font-size:10.500px;display:flex;align-items:center;justify-content:center;border-radius:3px 3px 0 0;margin-right:4px;border:1px solid #24732f;border-bottom:0}
.tab{padding:0 14px;display:flex;align-items:center;color:#3f4650;white-space:nowrap}
.tab.active{background:linear-gradient(#fff,#fdfdfe);border:1px solid #b3b6ba;border-bottom:0;border-radius:3px 3px 0 0;width:69px;padding:0;justify-content:center;color:#3f4650;margin-bottom:-1px;z-index:1;box-shadow:0 0 2px rgba(255,255,255,.8)}
.tab-tools{margin-left:auto;display:flex;align-items:center;gap:9.500px;padding-right:7px}
.mini-min{width:11px;height:5px;border:1px solid #555;background:#f5f5f6;border-radius:1px}
.help-q{font:700 12px "Liberation Sans",sans-serif;fill:#fff;text-anchor:middle}

.ribbon{height:87px;flex:none;display:flex;border-top:1px solid #b4b7bb;border-bottom:1px solid #9fa3a8;background:linear-gradient(#fdfdfe 0,#f6f7f9 55%,#eef0f3 80%,#e4e7ec 100%)}
.group{display:flex;flex-direction:column;border-right:1px solid #d3d6db;box-shadow:1px 0 0 #fbfcfd;height:85px;flex:none}
.g-clip{width:190px}.g-font{width:209px}.g-align{width:363px}.g-num{width:143px}.g-styles{width:250px}.g-cells{width:153px}.g-edit{width:235px}
.body{flex:1;display:flex;min-height:0}
.col{display:flex;flex-direction:column}
.glabel{height:16px;display:flex;color:#757b83;font-size:11.500px;line-height:14px;flex:none}
.glabel span{flex:1;text-align:center;white-space:nowrap}
.launcher{width:8px;height:8px;margin:3px 5px 0 5px;border:1px solid #a8adb3;border-width:1px 0 0 1px;position:relative;background:linear-gradient(135deg,transparent 55%,#7b8189 55%)}
.big{display:flex;flex-direction:column;align-items:center;padding-top:5px;flex:none;text-align:center;line-height:13px}
.big svg{height:31px;flex:none}
.lbl{margin-top:3px;white-space:nowrap;display:block}
.big .caret{margin-top:6px}
.w-paste{width:60px;padding-top:4px}
.w-paste .lbl{margin-top:3px}
.stack{display:flex;flex-direction:column;padding-top:0}
.item{display:flex;align-items:center;height:22px;white-space:nowrap}
.stack .item svg,.stack .item .sigma{margin-right:3px;flex:none}
.s-clip{margin-left:-2px}
.after{margin-left:7px}
.after2{display:inline-block;margin-left:4px;vertical-align:middle}

.g-font .col{padding:9px 0 0 5px}
.row{display:flex;align-items:center}
.r1{height:21px}
.r2{height:21px;margin-top:8px}
.combo{display:flex;align-items:center;height:21px;background:#fff;border:1px solid #c4c8cf;padding:0 0 0 3px;font-size:11px;color:#222;white-space:nowrap}
.combo span{flex:1}
.combo .caret{margin-right:5px}
.c-font{width:111px;letter-spacing:-.25px}
.c-size{width:43px;border-left:0}
.fontsz{font:700 17px "Liberation Serif",serif;color:#222;position:relative;line-height:20px}
.fontsz.grow{margin-left:6px;width:23px;font-size:18px}
.fontsz.shrink{margin-left:4px;font-size:14px;width:16px}
.up,.down{position:absolute;top:3px;width:0;height:0;border-left:3px solid transparent;border-right:3px solid transparent}
.up{left:11px;border-bottom:3px solid #3f78c9}
.down{left:9px;border-top:3px solid #3f78c9}
.fb{width:23px;text-align:center;font:700 14px "Liberation Serif",serif;color:#222}
.f-i{font-style:italic}
.f-u{text-decoration:underline}
.cc{margin:0 2px 0 5px}
.vsep{width:1px;height:20px;background:#d3d6db;margin:0 5px;flex:none;box-shadow:1px 0 0 #fdfdfe}
.m-fill{margin-left:3px}
.fcolor{width:17px;margin-left:2px;font:700 15px/15px "Liberation Serif",serif;color:#1e4b8f;text-align:center}
.fcolor i{height:4px;background:#9a3f0a;margin-top:1px}

.a-left{width:132px;padding:9px 0 0 6px;border-right:1px solid #d3d6db;height:69px;box-shadow:1px 0 0 #fbfcfd}
.ab{width:23px;height:21px;display:flex;align-items:center;justify-content:center;flex:none;border:1px solid transparent}
.ab.on{background:linear-gradient(#ffe9a8,#fbd365);border-color:#d5aa4f;border-radius:3px}
.orient{margin-left:4px}
.ind{margin-left:4px}
.i2{margin-left:7px}
.a-right{padding:9px 0 0 8px}
.a-right .item svg{margin-right:3px}
.mini-a{font:700 6px "Liberation Sans",sans-serif;fill:#222;text-anchor:middle}

.g-num .col{padding:9px 0 0 5px}
.c-num{width:134px}
.money{margin-left:5px}
.pct{font:400 14px "Noto Sans",sans-serif;width:26px;text-align:center;margin-left:0;color:#333}
.thou{font:400 12px "Noto Sans",sans-serif;width:21px;text-align:center;color:#333;letter-spacing:-.8px}
.dec{position:relative;width:18px;height:18px;font:700 9px/9px "Liberation Sans",sans-serif;color:#333;margin-left:4px;display:grid;grid-template-columns:7px auto;flex:none}
.dec2{margin-left:6px}
.dec .l2{grid-column:1/3}
.dec svg{margin-top:1px}
.dec .d2{grid-column:2;grid-row:1}

.g-styles .body{padding-left:3px}
.w-cond{width:110px}.w-table{width:88px}.w-cstyle{width:42px}
.g-cells .body{padding-left:5px}
.w-50{width:50px}.w-42{width:42px}
.s-edit{width:94px;padding-left:4px}
.sigma{font:700 15px "Liberation Serif",serif;color:#111;width:14px;text-align:center}
.s-edit .item svg,.s-edit .item .sigma{width:14px}
.s-edit .item span{margin-left:5px}
.w-sort{width:78px}.w-find{width:58px}
.az{font:700 16px "Liberation Serif",serif}
.az.a{fill:#2f5da5}.az.y{fill:#a33a24}

.fbar{height:26px;flex:none;display:flex;padding:3px 0 0;background:#dfe2e7;border-bottom:1px solid #9aa0a7}
.fbar>*{height:20px}
.namebox{width:157px;background:#fff;display:flex;align-items:center;border:1px solid #a8adb3;border-width:1px 1px 1px 0;font:13.500px "Liberation Sans",sans-serif;color:#111;padding-left:53px}
.namebox span{flex:1}
.namebox .caret{margin-right:5px}
.fx{width:84px;margin-left:3px;border:1px solid #a8adb3;border-right:0;border-radius:10px 0 0 10px;background:linear-gradient(#eceef2,#e1e4e9);display:flex;align-items:center;padding-left:6px}
.fx-dot{width:9px;height:9px;border-radius:50%;background:radial-gradient(#bfc3c9,#dfe2e6);border:1px solid #d2d5da}
.fx em{margin-left:auto;margin-right:6px;font:italic 700 14px "Liberation Serif",serif;color:#333}
.finput{flex:1;background:#fff;border:1px solid #a8adb3;border-right:0}
.fexp{width:20px;background:linear-gradient(#eceef2,#d8dbe1);border:1px solid #a8adb3;display:flex;align-items:center;justify-content:center;margin-right:0}

.sheet{flex:1;display:flex;min-height:0;background:#e2e5ea;padding-top:2px}
.grid-side{flex:1;display:flex;flex-direction:column;min-width:0}
.colhead{height:7px;display:flex;flex:none;background:#dde1e8;border-top:1px solid #c3c8cf}
.corner{width:9px;flex:none;background:#dde1e8;border-right:1px solid #9eadbd}
.ch{flex:none;background:#dfe3ea;border-right:1px solid #a7b5c4;font:3px/6px "Liberation Sans",sans-serif;color:#1c2530;text-align:center;font-weight:700;white-space:nowrap}
.ch.sel{background:#f8cd68;border-right-color:#c79a3a;color:#5a3b00}
.sheet-body{flex:1;display:flex;min-height:0}
.rowhead{width:9px;flex:none;overflow:hidden;background:#dfe3ea;border-right:1px solid #9eadbd}
.rh{background:#dfe3ea;border-bottom:1px solid #a7b5c4;font:3px/6px "Liberation Sans",sans-serif;color:#1c2530;text-align:center;font-weight:700;display:flex;align-items:center;justify-content:center}
.rh.sel{background:#f8cd68;border-bottom-color:#c79a3a;color:#5a3b00}
.canvas{flex:1;min-width:0;background:#fff}
.canvas svg{display:block;width:100%;height:100%}
.seat{font:700 2.800px "Liberation Sans",sans-serif;text-anchor:middle;stroke-width:.22px}
.tiny{font:700 3.400px "Liberation Sans",sans-serif;text-anchor:middle;fill:#222}
.t-head{font:700 7px "Liberation Sans",sans-serif;text-anchor:middle;fill:#111}
.t-mid{font:700 4.800px "Liberation Sans",sans-serif;text-anchor:middle;fill:#111}
.t-side{font:700 5.600px "Liberation Sans",sans-serif;text-anchor:middle;fill:#111}
.t-team{font:700 4.800px "Liberation Serif",serif;text-anchor:middle;fill:#222}
.t-num{font:700 7px "Liberation Sans",sans-serif;text-anchor:middle;fill:#222}

.vscroll{width:20px;flex:none;display:flex;flex-direction:column;padding:0 5px 0 1px;background:#e2e5ea}
.vsplit{height:6px;margin-top:3px;background:#f8f9fa;border:1px solid #9aa2ab;flex:none}
.varrow{height:17px;display:flex;align-items:center;justify-content:center;flex:none}
.tri-up{border-left:5px solid transparent;border-right:5px solid transparent;border-bottom:6px solid #5a6672}
.tri-down{border-left:5px solid transparent;border-right:5px solid transparent;border-top:6px solid #5a6672}
.vthumb{flex:1;background:linear-gradient(90deg,#fbfcfd,#e9ebef);border:1px solid #a7adb5;border-radius:2px;display:flex;align-items:center;justify-content:center}
.vthumb i{width:7px;height:5px;background:repeating-linear-gradient(#7d858e 0 1px,transparent 1px 2px)}

.tabbar{height:17px;flex:none;display:flex;background:#dfe3ea;border-top:1px solid #a3a9b0;border-bottom:1px solid #8e98a3;position:relative}
.navs{width:62px;display:flex;align-items:center;gap:6px;padding-left:5px;border-right:1px solid #a3a9b0;background:#e6e9ee}
.sheet-tab{width:68px;height:16px;background:#fff;font:700 14px/15px "Noto Sans",sans-serif;color:#3e4c5e;padding-left:9px;white-space:nowrap}
.new-tab{width:42px;display:flex;align-items:center;justify-content:center;background:#f1f3f6;clip-path:polygon(12px 0,100% 0,calc(100% - 12px) 100%,0 100%)}
.hscroll{margin-left:auto;width:652px;display:flex;align-items:center}
.hsplit{width:8px;height:15px;background:#f8f9fb;border:1px solid #9aa2ab;display:flex;align-items:center;justify-content:center;margin-left:0;flex:none}
.hsplit i{width:1px;height:7px;background:#777}
.tri-left{border-top:5px solid transparent;border-bottom:5px solid transparent;border-right:6px solid #5a6672;margin:0 9px 0 4px}
.tri-right{border-top:5px solid transparent;border-bottom:5px solid transparent;border-left:6px solid #5a6672;margin:0 7px 0 8px}
.hthumb{flex:1;height:15px;background:linear-gradient(#fbfcfd,#e7e9ed);border:1px solid #a7adb5;border-radius:2px;display:flex;align-items:center;justify-content:center}
.hthumb i{width:7px;height:7px;background:repeating-linear-gradient(90deg,#7d858e 0 1px,transparent 1px 2px)}
.s2{margin-right:21px}

.status{height:21px;flex:none;display:flex;align-items:center;background:linear-gradient(#e9ebee,#d7dade 40%,#bfc3c9);color:#3b4048}
.st-ready{width:55px;padding-left:8px;font-size:11.500px;border-right:1px solid #a6aab0;height:21px;line-height:20px}
.st-right{margin-left:auto;display:flex;align-items:center;height:21px;padding-right:4px}
.st-sep{width:1px;height:20px;background:#a6aab0;margin-right:4px}
.vb{width:20px;height:19px;display:flex;align-items:center;justify-content:center}
.vb.on{background:linear-gradient(#ffe9a8,#fbd365);border:1px solid #d5aa4f;border-radius:3px;margin-right:-1px}
.zoomval{font-size:11.500px;width:44px;text-align:center;padding-right:4px}
.zbtn{width:16px;height:16px;border-radius:50%;background:linear-gradient(#f6f7f8,#d3d6da);border:1px solid #858b92;display:flex;align-items:center;justify-content:center;position:relative;z-index:1}
.zbtn i{width:8px;height:2px;background:#4a525c}
.plus::after{content:"";position:absolute;width:2px;height:8px;background:#4a525c}
.zline{width:101px;height:1px;background:#8c9198;position:relative;margin:0 -1px}
.zthumb{position:absolute;left:8px;top:-6px}
.ztick{position:absolute;left:50px;top:-3px;width:1px;height:7px;background:#8c9198}

.taskbar{height:40px;flex:none;display:flex;align-items:stretch;border-top:1px solid #1f1a24;background:linear-gradient(90deg,#95839c 0,#a993b1 4%,#b3a2bd 10%,#b09fba 50%,#b4a4bf 78%,#a492ab 83%,#8f7e94 86%,#877689 100%)}
.orb{width:54px;display:flex;align-items:center;justify-content:center}
.plain{display:flex;align-items:center;justify-content:center}
.p-safari{width:67px}
.p-fox{width:64px}
.tb{display:flex;align-items:center;justify-content:center;padding-right:4px;border:1px solid rgba(50,40,60,.55);border-radius:3px;background:linear-gradient(rgba(255,255,255,.28),rgba(255,255,255,.12));box-shadow:inset 0 0 0 1px rgba(255,255,255,.3);position:relative}
.tb.act{background:linear-gradient(rgba(255,255,255,.55),rgba(255,255,255,.3))}
.tail{width:5px;border:1px solid rgba(50,40,60,.55);border-left:0;border-radius:0 3px 3px 0;background:rgba(255,255,255,.12)}
.t1{width:8px}.t2{width:9px}
.w51{width:51px}.w54{width:54px}.w55{width:55px}.w59{width:59px}.w60{width:60px}
.m2{margin-left:2px}.m3{margin-left:3px}
.badge{position:absolute;left:28px;top:23px;width:11px;height:11px;border-radius:50%;background:#f5a71f;color:#111;font:700 8px/11px "Liberation Sans",sans-serif;text-align:center}
.sky{font:700 21px "Liberation Sans",sans-serif;fill:#fff;text-anchor:middle}
.cmd{font:700 8px "Liberation Mono",monospace;fill:#fff}
.tray{margin-left:auto;display:flex;align-items:center;color:#f3f1f4}
.ru{font-size:12px;margin-right:7px}
.tray>svg{margin-right:9.500px;flex:none}
.act-ic{margin-left:-1px}
.clock{width:64px;text-align:center;font-size:11.500px;line-height:17px;margin-left:4px;margin-right:5px;text-shadow:0 0 2px rgba(50,40,60,.5)}
.showdesk{width:14px;height:38px;background:linear-gradient(90deg,rgba(255,255,255,.25),rgba(255,255,255,.1));border:1px solid rgba(60,50,70,.5);margin-right:1px}
```
FILE: script.js
```js
(function () {
  var topRows = [214.3,223.3,232.3,241.7,249,256,263,270,277,284,290.7];
  var sideRows = [318.3,324,333.3,341.7,349.3,357.7,366.3,373.3,382.7,390.7,399.3,407.3,415.3,423.3,431.7,439.3,448.3,456.7,464.7,472.3,480.3,488.3,497.7,505.3,513.3,520.7,529.3,538,547,556.3];
  var tlCols = [243,254.3,264,274.3,284.3,294.3,305,314.3,322.3,332.3,342.3,355.3,365.3,375.7,385.7,395.3,407.3,417.7,427.7,437.7,447.7];
  var midCols = [456.4,468.2,477.9,487.1,496.8,506.8,516.8,527.5,537.1,547.5,557.5,567.9,578.9,589.6,599.3,608.9,619.3,629.6,639.6,649.3,658.9,670.4,680.4,690.4,700.4,709.6,720,730.4,740.4,750,760];
  var trCols = [767.9,779.3,789.3,799.3,809.3,819.3,830.7,840.4,850,860,869.3,880.7,890.7,900.4,910.7,920,930.4,940,950,959.6,969.6];
  var leftCols = [27.3,40.7,51.7,62.7,73.7,84.7,95.7,106.7,118.7,129.7,141.7,153.7,163.7,173.7,183.7,193.7,204.3,214];
  var leftRows = [323.3,333.7,341.7,349.7,357.7,366.7,374,382.7,390.7,399,407.3,415.3,422.7,431.3,439.3,448.3,456.7,465.7,472.7,480.7,488.7,497.3,505.3,512.7,520.3,529.7,538.3,546.7,555.7];
  var towerCols = [999.3,1009.3,1019.3,1029.3,1039.3,1049.3,1059.3];
  var botRows = [587.3,595.3,601.7,607.7,613.7,620];

  /* column headers */
  var edges = [9,18.3].concat(leftCols, [223.7,233.3], tlCols, midCols, trCols, [979.3,989.3], towerCols);
  var x = edges[edges.length - 1], k = 0;
  while (x + 10.5 < 1580) { x += (k++ % 3 === 0) ? 10.5 : 10; edges.push(x); }
  edges.push(1580);
  function colName(i) {
    var s = '';
    i += 1;
    while (i > 0) { var m = (i - 1) % 26; s = String.fromCharCode(65 + m) + s; i = Math.floor((i - 1) / 26); }
    return s;
  }
  var ch = '';
  var prev = 9;
  for (var i = 1; i < edges.length; i++) {
    var w = Math.round(edges[i]) - Math.round(prev);
    prev = edges[i];
    ch += '<div class="ch' + (colName(i - 1) === 'AM' ? ' sel' : '') + '" style="width:' + w + 'px">' + colName(i - 1) + '</div>';
  }
  document.getElementById('colhead').insertAdjacentHTML('beforeend', ch);

  /* row headers */
  var rEdges = [170,178.3,187.3,196.3,205.3].concat(topRows, [297.7,304.7,311.7], sideRows, [564,569.3,578], botRows);
  var y = rEdges[rEdges.length - 1];
  while (y + 8 <= 822) { y += 8; rEdges.push(y); }
  var rh = '';
  prev = 170;
  for (i = 1; i < rEdges.length; i++) {
    var h = Math.round(rEdges[i]) - Math.round(prev);
    prev = rEdges[i];
    rh += '<div class="rh' + (i === 43 ? ' sel' : '') + '" style="height:' + h + 'px">' + i + '</div>';
  }
  document.getElementById('rowhead').innerHTML = rh;

  /* drawing helpers */
  var d = '', texts = '';
  function r(v) { return Math.round(v); }
  function hl(x1, x2, yy, w) { w = w || 1; d += 'M' + r(x1) + ' ' + (r(yy) - (w > 1 ? 1 : 0)) + 'H' + (r(x2) + 1) + 'v' + w + 'H' + r(x1) + 'z'; }
  function vl(xx, y1, y2, w) { w = w || 1; d += 'M' + (r(xx) - (w > 1 ? 1 : 0)) + ' ' + r(y1) + 'V' + (r(y2) + 1) + 'h' + w + 'V' + r(y1) + 'z'; }
  function lattice(xs, ys) {
    xs.forEach(function (v) { vl(v, ys[0], ys[ys.length - 1]); });
    ys.forEach(function (v) { hl(xs[0], xs[xs.length - 1], v); });
  }
  function box(x1, y1, x2, y2, w) { w = w || 2; hl(x1, x2, y1, w); hl(x1, x2, y2, w); vl(x1, y1, y2, w); vl(x2, y1, y2, w); }
  function t(cls, xx, yy, s, extra) { texts += '<text class="' + cls + '" x="' + xx + '" y="' + yy + '"' + (extra || '') + '>' + s + '</text>'; }
  var inks = ['#0d3a70', '#6b3c08', '#141414', '#0b5a92', '#7a4608'];
  var seatNo = 1;
  function seats(xs, ys, rows) {
    for (var c = 0; c < xs.length - 1; c++) {
      var ink = inks[(c + (c >> 2)) % inks.length];
      for (var j = 0; j < rows; j++) {
        var cx = (xs[c] + xs[c + 1]) / 2 + 0.5;
        texts += '<text class="seat" fill="' + ink + '" stroke="' + ink + '" x="' + cx.toFixed(1) + '" y="' + (ys[j + 1] - 1).toFixed(1) + '">' + seatNo + '</text>';
      }
      seatNo++;
    }
  }

  /* tribune B, left */
  lattice(tlCols, topRows);
  [0,5,10,15,20].forEach(function (n) { vl(tlCols[n], topRows[0], topRows[10], 2); });
  hl(tlCols[0], tlCols[20], topRows[0], 2); hl(tlCols[0], tlCols[20], topRows[10], 2);
  seats(tlCols, topRows, 10);

  /* tribune B, middle */
  lattice(midCols.slice(0, 11), topRows);
  lattice(midCols.slice(10, 21), topRows.slice(0, 9));
  lattice(midCols.slice(20), topRows);
  [0,5,10,15,20,25,30].forEach(function (n) {
    var bottom = (n > 10 && n < 20) ? topRows[8] : topRows[10];
    vl(midCols[n], topRows[0], bottom, 2);
  });
  hl(midCols[0], midCols[30], topRows[0], 2);
  hl(midCols[0], midCols[10], topRows[10], 2);
  hl(midCols[10], midCols[20], topRows[8], 2);
  hl(midCols[20], midCols[30], topRows[10], 2);
  seats(midCols.slice(0, 11), topRows, 10);
  seats(midCols.slice(10, 21), topRows, 8);
  seats(midCols.slice(20), topRows, 10);

  /* tribune B, right */
  lattice(trCols, topRows);
  [0,5,10,15,20].forEach(function (n) { vl(trCols[n], topRows[0], topRows[10], 2); });
  hl(trCols[0], trCols[20], topRows[0], 2); hl(trCols[0], trCols[20], topRows[10], 2);
  seats(trCols, topRows, 10);

  /* row numbers beside tribune B */
  ['#','9','8','7','6','5','4','3','2','1'].forEach(function (s, n) {
    t('t-num', 975.5, [221.5,230.5,240,247.5,254.5,261.5,268.5,275.5,282.5,289.5][n], s);
    t('tiny', 241, topRows[n + 1] - 2, 10 - n);
  });

  /* tribune A */
  lattice(leftCols, leftRows);
  box(leftCols[0], leftRows[0], leftCols[17], leftRows[28]);
  [4,8,12,16,20,24].forEach(function (n) { hl(leftCols[0], leftCols[17], leftRows[n], 2); });
  hl(173.7, 183.7, 365.7, 2);
  var topLab = [36.7,48.3,59,70,81,92,103,116,127,139,151,161,171,181,191,201.7];
  topLab.forEach(function (lx, n) { t('tiny', lx, 323, 16 - n); t('tiny', lx, 561.5, 16 - n); });
  for (i = 0; i < 28; i++) t('tiny', 23.5, leftRows[i + 1] - 1.5, 28 - i);

  /* court */
  hl(233.3, 660, 317.3, 2);
  hl(678.6, 989, 317.3, 2);
  vl(233.3, 317.3, 569.3, 2);
  vl(989, 317.3, 569.3, 2);
  hl(233.3, 989, 569.3, 2);
  t('t-team', 499, 555, 'РОССИЯ');
  t('t-team', 638, 555, 'WORLD TEAM');

  /* tribune C */
  lattice(towerCols.slice(0, 3), sideRows);
  hl(999.3, 1059.3, sideRows[0]);
  towerCols.slice(2).forEach(function (v) { vl(v, sideRows[0], sideRows[1]); });
  lattice(towerCols.slice(2), sideRows.slice(1, 14));
  lattice(towerCols.slice(2), sideRows.slice(17));
  box(1019.3, 324, 1059.3, 556.3);
  [5,9,13,17,21,25].forEach(function (n) { hl(1019.3, 1059.3, sideRows[n], 2); });
  [1024.5,1034.5,1044.5,1054.5].forEach(function (lx, n) { t('seat', lx, 323, 4 - n, ' fill="#7a4a10" stroke="#7a4a10"'); });
  t('tiny', 1039, 441.5, 'ТВ');
  var no = 1;
  for (i = 1; i < 29; i++) {
    if (i >= 13 && i < 17) continue;
    t('tiny', 1066, sideRows[i + 1] - 2.5, no++);
  }

  /* boxes */
  var bx = [
    [[233.3,244,254.3,264.7,274.3],[294.3,305,315,322.7,332.7],284,'В1'],
    [[354.3,365.7,375.7,385.7,395.7],[417.3,427.7,437.7,447.7,457.7],406,'В2'],
    [[476.3,487.7,497.7,507.7,517.7],[537.3,547.7,558,568,579.7],527,'В3'],
    [[598.3,609.7,619.7,629.7,639.7],[659.7,669.7,680,690,699.7],649,'В4'],
    [[718.3,730,740,750,759.3],[779.3,790,800,810,819.3],769,'В5'],
    [[838.3,850,860,870,879.3],[899.3,910,920,930,939.3],889,'В6']
  ];
  bx.forEach(function (b) {
    lattice(b[0], botRows);
    lattice(b[1], botRows);
    box(b[0][0], botRows[0], b[1][4], botRows[5]);
    seatNo = 1;
    seats(b[0], botRows, 5);
    seats(b[1], botRows, 5);
    t('tiny', b[2], 632, b[3]);
  });
  hl(598.3, 619.7, 595.3, 2);
  [593,600,606,612,618].forEach(function (dy, n) { t('seat', 945, dy, 5 - n, ' fill="#7a4a10" stroke="#7a4a10"'); });

  /* titles */
  t('t-head', 481, 176, '"Легенды тенниса в Москве"');
  t('t-head', 475.5, 186, '12 июня 2014 г., г. Москва, Национальный теннисный центр имени Х.А. Самаранча');
  t('t-mid', 597.5, 204, 'Трибуна В');
  t('t-side', 0, 0, 'Трибуна А', ' transform="translate(15.5 434.5) rotate(-90)"');
  t('t-side', 0, 0, 'Трибуна С - специальная', ' transform="translate(1071 461) rotate(90)"');

  /* the selected cell */
  var sel = '<path d="M406 504h13v10h-13z" fill="#000"/><path d="M409 507h7.500v4H409z" fill="#fff"/><rect x="415" y="510" width="5.500" height="5.500" fill="#000"/>';

  document.getElementById('canvas').innerHTML =
    '<svg viewBox="9 170 1571 652" preserveAspectRatio="none" shape-rendering="crispEdges"><path d="' + d + '" fill="#000"/>' + sel + texts + '</svg>';
})();
```
